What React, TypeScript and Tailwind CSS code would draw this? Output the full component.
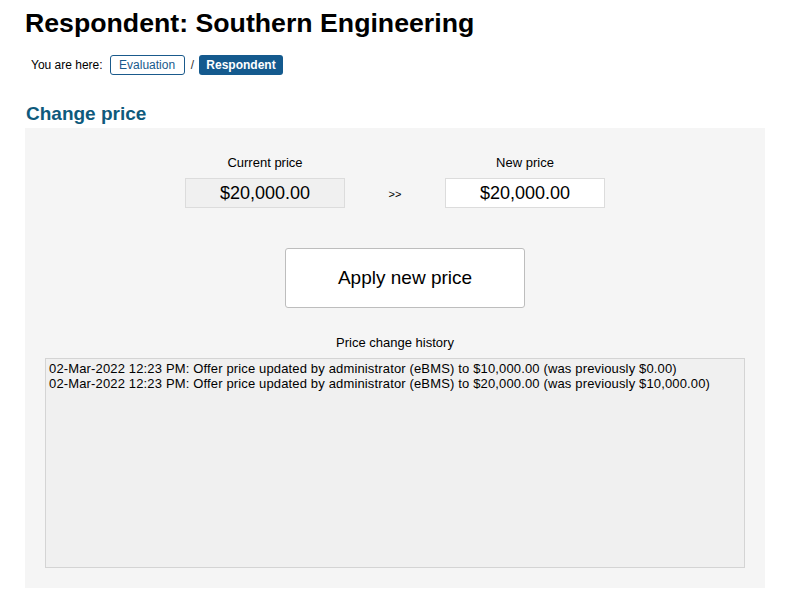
export default function App() {
  const history = [
    "02-Mar-2022 12:23 PM: Offer price updated by administrator (eBMS) to $10,000.00 (was previously $0.00)",
    "02-Mar-2022 12:23 PM: Offer price updated by administrator (eBMS) to $20,000.00 (was previously $10,000.00)",
  ];

  return (
    <div className="min-h-screen bg-white font-['Liberation_Sans',Arial,sans-serif] text-black">
      <div className="w-[740px] ml-[25px] pt-[4px]">
        <h1 className="text-[26.7px] font-bold leading-[38px]">Respondent: Southern Engineering</h1>

        <div className="flex items-center mt-[13px] ml-[6px] text-[12px]">
          <span>You are here:</span>
          <span className="ml-[7px] h-[20px] w-[75px] flex items-center justify-center border border-[#1a5a8c] rounded-[3px] text-[#1a5a8c] bg-white">
            Evaluation
          </span>
          <span className="ml-[6px] text-[#333]">/</span>
          <span className="ml-[5px] h-[20px] w-[84px] flex items-center justify-center rounded-[3px] bg-[#145a8e] text-white font-bold">
            Respondent
          </span>
        </div>

        <h2 className="mt-[26px] text-[19px] font-bold leading-[25px] text-[#0e5a7c] ml-[1px]">Change price</h2>

        <div className="mt-[2px] bg-[#f5f5f5] h-[460px] pt-[27px] px-[20px]">
          <div className="flex items-end justify-center">
            <div className="flex flex-col items-center w-[160px]">
              <span className="text-[13px] leading-[16px]">Current price</span>
              <div className="mt-[7px] w-[160px] h-[30px] flex items-center justify-center bg-[#f0f0f0] border border-[#dcdcdc] text-[18px]">
                $20,000.00
              </div>
            </div>
            <div className="w-[100px] h-[30px] flex items-center justify-center text-[11px] pt-[2px]">&gt;&gt;</div>
            <div className="flex flex-col items-center w-[160px]">
              <span className="text-[13px] leading-[16px]">New price</span>
              <div className="mt-[7px] w-[160px] h-[30px] flex items-center justify-center bg-white border border-[#dcdcdc] text-[18px]">
                $20,000.00
              </div>
            </div>
          </div>

          <div className="flex justify-center mt-[40px] pl-[20px]">
            <button
              type="button"
              className="w-[240px] h-[60px] bg-white border border-[#bdbdbd] rounded-[3px] text-[19px]"
            >
              Apply new price
            </button>
          </div>

          <div className="text-center text-[13px] leading-[16px] mt-[27px]">Price change history</div>

          <div className="mt-[7px] h-[210px] bg-[#f0f0f0] border border-[#d4d4d4] px-[3px] pt-[3px] text-[13px] leading-[14.5px]">
            {history.map((line, i) => (
              <div key={i} className="tracking-[0.15px]">{line}</div>
            ))}
          </div>
        </div>
      </div>
    </div>
  );
}
